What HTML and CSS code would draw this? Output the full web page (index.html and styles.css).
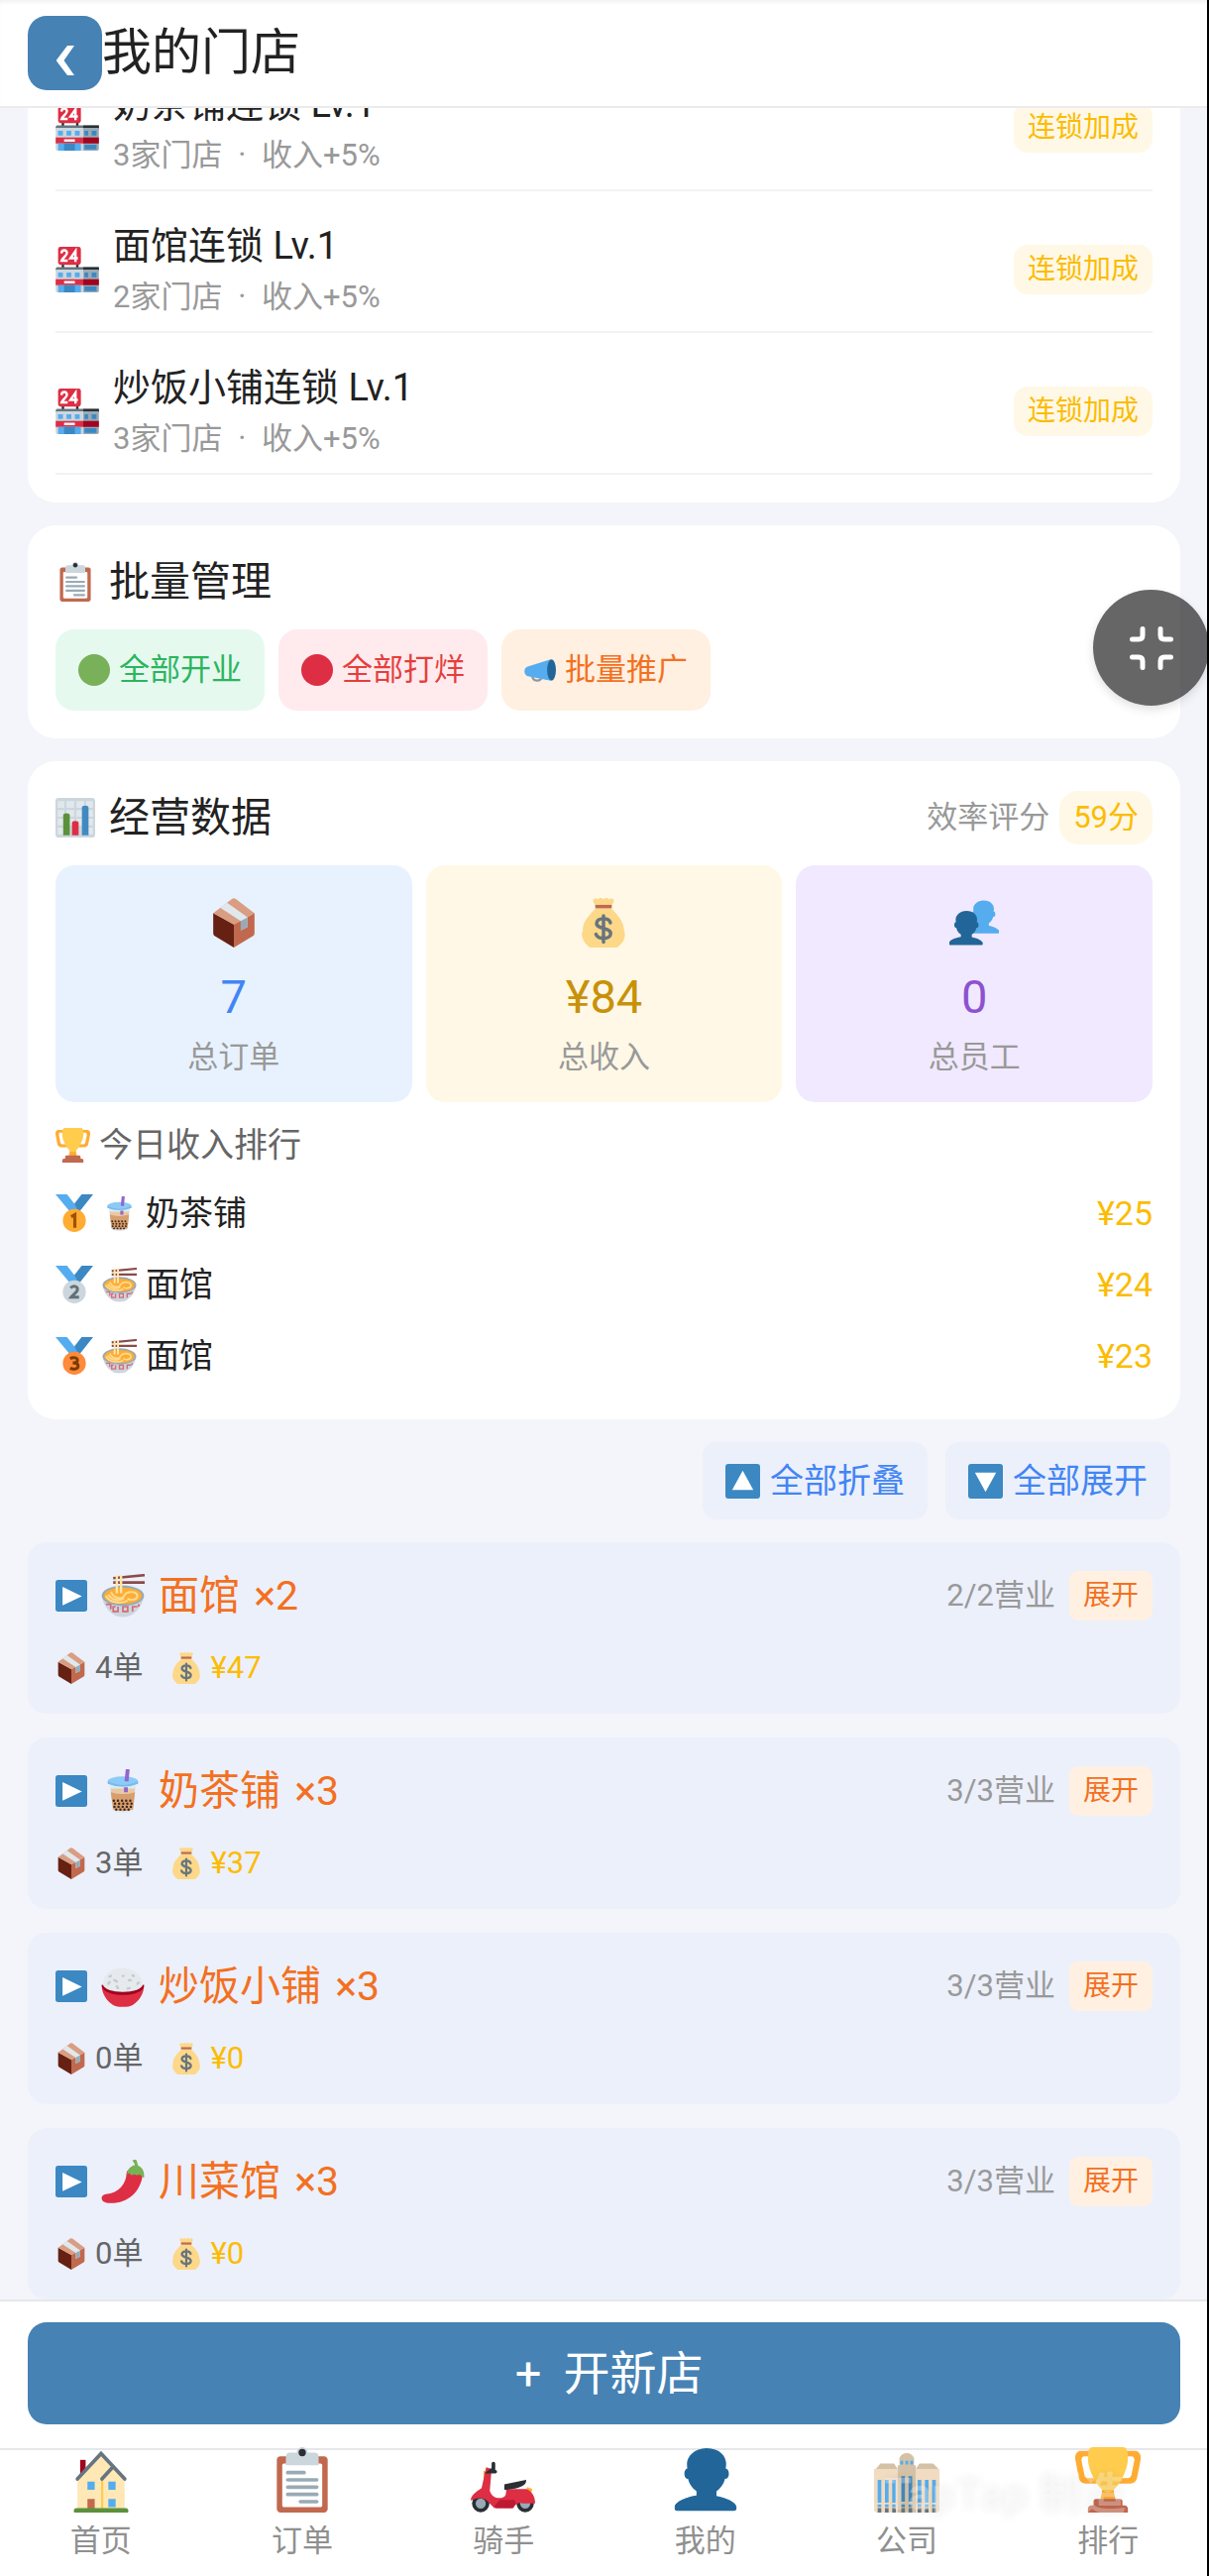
FILE: index.html
```html
<!DOCTYPE html>
<html lang="zh-CN">
<head>
    <meta charset="UTF-8">
    <meta name="viewport" content="width=device-width, initial-scale=1.0">
    <title>我的门店</title>
    <link rel="stylesheet" href="styles.css">
</head>
<body>
    <!-- 图标 -->
    <svg class="sprite" aria-hidden="true">
        <symbol id="i-shop24" viewBox="0 0 36 38">
            <path fill="#292f33" d="M5 14h2v4H5zM17 14h2v4h-2z"/>
            <rect fill="#dd2e44" x="2" y="0" width="19" height="15" rx="2"/>
            <path fill="none" stroke="#fff" stroke-width="2" d="M4.800 5.500c.2-3.600 5-3.300 4.500 0C9 7.500 6 9 5 11.500h5M16.500 12.500V3.500L12.300 9.500h6.200"/>
            <path fill="#66757f" d="M1 17h35v3H0v-2z"/>
            <path fill="#292f33" d="M23 17h13v3H23z"/>
            <path fill="#ccd6dd" d="M0 19h23v19H1l-1-1z"/>
            <path fill="#99aab5" d="M23 19h13v18l-1 1H23z"/>
            <path fill="#55acee" d="M2 21.500h4v4H2zM9 21.500h4v4H9zM16 21.500h4v4h-4z"/>
            <path fill="#3b88c3" d="M24 21.500h3v4h-3zM30 21.500h4v4h-4z"/>
            <path fill="#dd2e44" d="M0 27h23v5H0z"/>
            <path fill="#a0041e" d="M23 27h13v5H23z"/>
            <path fill="#fff" d="M7 28.500h9v2H7z"/>
            <path fill="#55acee" d="M2 32h19v6H2z"/>
            <path fill="#3b88c3" d="M7 32h9v6H7zM24 33h10v4H24z"/>
        </symbol>
        <symbol id="i-clipboard" viewBox="0 0 36 36">
            <path fill="#c1694f" d="M32 34c0 1.104-.896 2-2 2H6c-1.104 0-2-.896-2-2V7c0-1.104.896-2 2-2h24c1.104 0 2 .896 2 2v27z"/>
            <path fill="#fff" d="M29 32c0 .553-.447 1-1 1H8c-.552 0-1-.447-1-1V10c0-.552.448-1 1-1h20c.553 0 1 .448 1 1v22z"/>
            <path fill="#ccd6dd" d="M25 3h-4c0-1.657-1.343-3-3-3s-3 1.343-3 3h-4c-1.104 0-2 .896-2 2v5h18V5c0-1.104-.896-2-2-2z"/>
            <circle fill="#292f33" cx="18" cy="3" r="2"/>
            <path fill="none" stroke="#99aab5" stroke-width="2" stroke-linecap="round" d="M10 14h9M10 18h16M10 22h16M10 26h16M17 30h9"/>
        </symbol>
        <symbol id="i-green" viewBox="0 0 36 36"><circle fill="#78b159" cx="18" cy="18" r="18"/></symbol>
        <symbol id="i-red" viewBox="0 0 36 36"><circle fill="#dd2e44" cx="18" cy="18" r="18"/></symbol>
        <symbol id="i-megaphone" viewBox="0 0 36 36">
            <path fill="none" stroke="#8899a6" stroke-width="2.500" d="M9 23c0 9 11 9 11 2"/>
            <path fill="#55acee" d="M30 6 4 14c-5 1-5 10 0 11l26 5z"/>
            <ellipse fill="#269" cx="31" cy="18" rx="5" ry="12"/>
        </symbol>
        <symbol id="i-chart" viewBox="0 0 36 36">
            <rect fill="#ccd6dd" width="36" height="36" rx="3"/>
            <path fill="#e1e8ed" d="M2 3h6v6H2zM10 3h7v6h-7zM19 3h7v6h-7zM28 3h6v6h-6zM2 11h6v6H2zM10 11h7v6h-7zM19 11h7v6h-7zM28 11h6v6h-6zM2 19h6v6H2zM10 19h7v6h-7zM19 19h7v6h-7zM28 19h6v6h-6zM2 27h6v6H2zM28 27h6v6h-6z"/>
            <path fill="#5c913b" d="M7 16q0-2 3-2t3 2v18H7z"/>
            <path fill="#dd2e44" d="M15 23q0-2 3-2t3 2v11h-6z"/>
            <path fill="#4289c1" d="M24 9q0-2 3-2t3 2v25h-6z"/>
        </symbol>
        <symbol id="i-box" viewBox="0 0 36 36">
            <path fill="#662113" d="M3 11l15 8v17L4 27.500q-1-.5-1-2z"/>
            <path fill="#c1694f" d="M18 19l15-8v14.500q0 1.500-1 2L18 36z"/>
            <path fill="#d99e82" d="M18 .2q.6 0 1.200.4L33 11l-15 8.500L3 11 16.800.6Q17.400.2 18 .2z"/>
            <path fill="#e1e8ed" d="M13 3.500 28 14v7l-5 2.500v-6.700L8 7z"/>
            <path fill="#99aab5" d="M28 14v7l-5 2.500v-6.700z"/>
        </symbol>
        <symbol id="i-money" viewBox="0 0 36 36">
            <path fill="#fdd888" d="M12 8C7 13 2.500 18 3 24c-2 3 .5 8 3 10 1 1.500 2 2 4 2h16c2 0 3-.5 4-2 3-2 4.500-7 3-10 0-6-4-11-9-16z"/>
            <path fill="#fdd888" d="M10.500 1.500c1-2 3-1 3.500-.5 1-1.300 3-1.300 4 0 1-1.300 3-1.300 4 0 1-1 3-1 3.500.5.500 2-2 3-2 6h-11c0-3-2.500-4-2-6z"/>
            <path fill="#bf6952" d="M12 5h12v2.500H12z"/>
            <path fill="none" stroke="#67757f" stroke-width="2.500" stroke-linecap="round" d="M23 18c-1-4-9.500-4-10 .3C12.600 23 23.500 21 23.200 26c-.3 4.300-9.400 4.300-10.700.3M18 13v19"/>
        </symbol>
        <symbol id="i-user" viewBox="0 0 36 36">
            <path d="M24 26.799v-2.566c2-1.348 4.080-3.779 4.703-6.896.186.103.206.17.413.17.991 0 1.709-1.287 1.709-2.873 0-1.562-.823-2.827-1.794-2.865.187-.674.293-1.577.293-2.735C29.324 5.168 26 .527 18.541.527c-6.629 0-10.777 4.641-10.777 8.507 0 1.123.069 2.043.188 2.755-.911.137-1.629 1.352-1.629 2.845 0 1.587.804 2.873 1.796 2.873.206 0 .025-.067.209-.17C8.952 20.453 11 22.885 13 24.232v2.414c-5 .645-12 3.437-12 6.230v1.061C1 35 2.076 35 3.137 35h29.725C33.924 35 35 35 35 33.938v-1.061c0-2.615-6-5.225-11-6.078z"/>
        </symbol>
        <symbol id="i-users" viewBox="0 0 36 36">
            <use href="#i-user" x="12" y="1" width="25" height="26" fill="#55acee"/>
            <use href="#i-user" x="-1" y="9" width="26" height="26" fill="#269"/>
        </symbol>
        <symbol id="i-trophy" viewBox="0 0 36 36">
            <path fill="#ffac33" fill-rule="evenodd" d="M3 2h30c2 0 3.500 2 3 5l-2 10c-.4 1.800-2 3-4 3H6c-2 0-3.600-1.200-4-3L.1 7C-.4 4 1 2 3 2zm2 3c-1 0-1.700.8-1.500 2.500L5 15c.2 1.200 1 2 2 2h4L7 5zm24 0-4 12h4c1 0 1.800-.8 2-2l1.500-7.500C32.700 5.800 32 5 31 5z"/>
            <path fill="#ffac33" d="M15 22h6c.3 5 1.500 8 3 10H12c1.500-2 2.700-5 3-10z"/>
            <path fill="#ffcc4d" d="M29 6.600C29 13.500 22.300 25 18 25S7 13.500 7 6.600C7 1 8 0 10 0h16c2 0 3 1 3 6.600z"/>
            <path fill="#c1694f" d="M9 32h18c1.500 0 2 1 2 2v2H7v-2c0-1 .5-2 2-2zM10 30q0-1.500 1.500-1.500h13Q26 28.500 26 30v3H10z"/>
        </symbol>
        <symbol id="i-ribbon" viewBox="0 0 36 36">
            <path fill="#55acee" d="M0 0h11l11 14-7 4z"/>
            <path fill="#3b88c3" d="M36 0H25L18 9l4.500 8z"/>
        </symbol>
        <symbol id="i-gold" viewBox="0 0 36 36">
            <use href="#i-ribbon" width="36" height="36"/>
            <circle fill="#ffac33" cx="18" cy="25" r="11"/>
            <path fill="none" stroke="#9e5200" stroke-width="3" d="M15 21.500l3.500-2V32"/>
        </symbol>
        <symbol id="i-silver" viewBox="0 0 36 36">
            <use href="#i-ribbon" width="36" height="36"/>
            <circle fill="#ccd6dd" cx="18" cy="25" r="11"/>
            <path fill="none" stroke="#627077" stroke-width="2.800" d="M14.500 21.500c2-3 7-2 6.500 1.500-.3 2.500-4 4.500-6 7h7.500"/>
        </symbol>
        <symbol id="i-bronze" viewBox="0 0 36 36">
            <use href="#i-ribbon" width="36" height="36"/>
            <circle fill="#ff8a3b" cx="18" cy="25" r="11"/>
            <path fill="none" stroke="#7c3b00" stroke-width="2.800" d="M14 20.500c3-1.500 7-1 7 1.500 0 2-2 2.700-4.500 2.700 3 0 5.200.8 5.200 3 0 3-4.700 3.500-7.700 2"/>
        </symbol>
        <symbol id="i-tea" viewBox="0 0 36 36">
            <path fill="#dbeaf5" d="M7 11h22l-2.500 23c-2 2.500-15 2.500-17 0z"/>
            <path fill="#e8c9a6" d="M8 16h20l-1.800 17c-2 2-14.400 2-16.400 0z"/>
            <path fill="#d99e6d" d="M8 19q10 3 20 0l-1.600 14c-2 2-14.400 2-16.400 0z"/>
            <path fill="none" stroke="#3d2a20" stroke-width="2" stroke-linecap="round" stroke-dasharray="0 3.400" d="M10.500 26h15.500M11.500 28.500h14M11 31h14.500M12.500 33.300h12"/>
            <ellipse fill="#8ccaf7" cx="18" cy="10" rx="12.500" ry="4"/>
            <path fill="#77bbeb" d="M5.500 10q12.500 6 25 0v2q-12.500 5-25 0z"/>
            <path fill="none" stroke="#9266cc" stroke-width="3.200" d="M21 10 22 0M20.500 19v-4"/>
        </symbol>
        <symbol id="i-noodle" viewBox="0 0 36 36">
            <path fill="#ccd6dd" d="M1 18h34c0 7-5 13-10 16-3 2-11 2-14 0C6 31 1 25 1 18z"/>
            <path fill="none" stroke="#dd2e44" stroke-opacity=".65" stroke-width="1.400" d="M4 25h4v4M12 27h-2v4h4v-4M22 27h-4v4h4zM26 31v-4h4M31 25v2"/>
            <ellipse fill="#99aab5" cx="18" cy="18" rx="17.500" ry="8.500"/>
            <ellipse fill="#ffac33" cx="18" cy="18" rx="15.500" ry="6.800"/>
            <path fill="none" stroke="#fddc8f" stroke-width="1.700" d="M4 18c3 6 12 7 18 4M8 15c3 6 10 6 11 3 2-4 10-4 11 0 0 4-7 4-8 2M6 17c4 6 10 5 13 3"/>
            <path fill="none" stroke="#8a4b48" stroke-width="2.200" d="M10 3.500 36 1M10 7h26"/>
            <path fill="none" stroke="#ffe5a8" stroke-width="2" d="M13 1v15M16.500 1v15"/>
        </symbol>
        <symbol id="i-rice" viewBox="0 0 36 36">
            <path fill="#dd2e44" d="M.500 17h35c0 8-5 14-9.500 16.500-3 2-13 2-16 0C5.500 31 .500 25 .500 17z"/>
            <path fill="#a0041e" d="M.500 17h35c0 11-35 11-35 0z"/>
            <path fill="#e6eaed" d="M1.500 16C3 6 10 3 18 3s15 4 16.500 13c0 9-33 9-33 0z"/>
            <path fill="none" stroke="#c0ccd5" stroke-width="2" stroke-linecap="round" d="M7 10l1-.5M11 13l2 1M18 9.500h.5M23 13h1.500M6 16l1-1.500M13 18l1 1.500M22 20l1.500-.5M30 16l1-1M26 9l1 .5"/>
        </symbol>
        <symbol id="i-pepper" viewBox="0 0 36 36">
            <path fill="#dd2e44" d="M21 11c0 8-6 16.500-17 17.500-5 .5-5 7 2 7.200C20 37 33 28 34.500 11c0-5-13-5-13.500 0z"/>
            <path fill="#77b255" d="M26 1c0-1 3-2 3.500 0l1 4c3 1 5.500 4 5 10-2-1-2-2-4-3-1 1-2 1-4 0-2 1-3 1-4-1l-2 1c0-4 3-7 6.500-7.500C27.500 3 27 2 26 1z"/>
        </symbol>
        <symbol id="i-up" viewBox="0 0 36 36">
            <rect fill="#3b88c3" width="36" height="36" rx="3"/><path fill="#fff" d="M18 7l11 20H7z"/>
        </symbol>
        <symbol id="i-down" viewBox="0 0 36 36">
            <rect fill="#3b88c3" width="36" height="36" rx="3"/><path fill="#fff" d="M18 29l11-20H7z"/>
        </symbol>
        <symbol id="i-play" viewBox="0 0 36 36">
            <rect fill="#3b88c3" width="36" height="36" rx="3"/><path fill="#fff" d="M30 18.500 8 29V8z"/>
        </symbol>
        <symbol id="i-home" viewBox="0 0 36 36">
            <path fill="#a0041e" d="M6.500 7h3v9h-3z"/>
            <path fill="#ffe8b6" d="M5 17 18 4l13 12v18H5z"/>
            <path fill="#ffcc4d" d="M18 18h1.200v16H18z"/>
            <path fill="none" stroke="#66757f" stroke-width="2" stroke-linecap="round" d="M5 17.500 18 3.500l13 14M18.500 17.500l5.500-6"/>
            <path fill="#55acee" d="M10.500 19h4v4.500h-4zM22 19h4v4.500h-4zM22 28.500h4V33h-4z"/>
            <path fill="#c1694f" d="M10.500 28.500h4V35h-4z"/>
            <rect fill="#5c913b" x="3" y="33.500" width="30" height="3" rx="1.500"/>
        </symbol>
        <symbol id="i-scooter" viewBox="0 0 36 36">
            <circle fill="#99aab5" stroke="#292f33" stroke-width="2" cx="5.500" cy="31" r="3.800"/>
            <circle fill="#99aab5" stroke="#292f33" stroke-width="2" cx="30" cy="31" r="3.800"/>
            <path fill="#ffac33" d="M7 13l3 1-1 4-2-1zM31 22l3 1-1 3h-3z"/>
            <path fill="#dd2e44" d="M8.500 11 11.500 12 10.500 24c1 3 3 4 5 4 4 0 4-2 4-5h11c3 1 5 4 5 8h-7c-3-1-4 1-5 2.500H13l-3-3c-2-3-7-3-10-1 0-3 3-5 6-7z"/>
            <path fill="#be1931" d="M16 29h8l1 2-2 2.500h-9l-1-1z"/>
            <path fill="none" stroke="#292f33" stroke-width="2" stroke-linecap="round" d="M12.500 9v3l-2 1.500h3"/>
            <path fill="#292f33" d="M18.500 20.500 30.500 18c.5 3.500-5 5-12 5.500z"/>
        </symbol>
        <symbol id="i-office" viewBox="0 0 36 36">
            <path fill="#d3c2a7" d="M1 12l2.500-3H11l2 3zM23 12l2-3h7.500l3 3zM14 7c0-5 8-5 8 0z"/>
            <path fill="#f1dcc1" d="M0 12h13v24H1.500L0 35zM23 12h13v23l-1.500 1H23z"/>
            <path fill="#d3c2a7" d="M14 6h8v4h1v26H13V10h1z"/>
            <path fill="#55acee" d="M2 18h2v12.500H2zM6 18h2v12.500H6zM10 18h2v12.500h-2zM24 18h2v12.500h-2zM28 18h2v12.500h-2zM32 18h2v12.500h-2zM2 31.500h2v1.500H2zM6 31.500h2v1.500H6zM10 31.500h2v1.500h-2zM24 31.500h2v1.500h-2zM28 31.500h2v1.500h-2zM32 31.500h2v1.500h-2zM14.500 7.500h1.500v2h-1.500zM17.300 7.500h1.500v2h-1.500zM20 7.500h1.500v2H20z"/>
            <path fill="#4289c1" d="M15 16h2v14h-2zM19 16h2v14h-2zM15 31.500h2V33h-2zM19 31.500h2V33h-2z"/>
            <path fill="#66757f" d="M2 33.500h2V36H2zM6 33.500h2V36H6zM10 33.500h2V36h-2zM15 33.500h2V36h-2zM19 33.500h2V36h-2zM24 33.500h2V36h-2zM28 33.500h2V36h-2zM32 33.500h2V36h-2z"/>
        </symbol>
    </svg>

    <header class="header">
        <button class="back-btn" aria-label="返回">
            <svg width="18" height="30" viewBox="0 0 18 30"><path fill="#fff" d="M11 0h7L7.500 15 18 30h-7L0 15.500v-1z"/></svg>
        </button>
        <h1>我的门店</h1>
    </header>

    <main class="content">
        <section class="card">
            <ul class="chain-list">
                <li class="chain-item">
                    <svg class="icon-chain"><use href="#i-shop24"/></svg>
                    <div class="chain-info">
                        <div class="chain-name">奶茶铺连锁 Lv.1</div>
                        <div class="chain-desc">3家门店 <span class="dot">·</span> 收入+5%</div>
                    </div>
                    <span class="tag tag-gold">连锁加成</span>
                </li>
                <li class="chain-item">
                    <svg class="icon-chain"><use href="#i-shop24"/></svg>
                    <div class="chain-info">
                        <div class="chain-name">面馆连锁 Lv.1</div>
                        <div class="chain-desc">2家门店 <span class="dot">·</span> 收入+5%</div>
                    </div>
                    <span class="tag tag-gold">连锁加成</span>
                </li>
                <li class="chain-item">
                    <svg class="icon-chain"><use href="#i-shop24"/></svg>
                    <div class="chain-info">
                        <div class="chain-name">炒饭小铺连锁 Lv.1</div>
                        <div class="chain-desc">3家门店 <span class="dot">·</span> 收入+5%</div>
                    </div>
                    <span class="tag tag-gold">连锁加成</span>
                </li>
            </ul>
        </section>

        <section class="card">
            <div class="card-header">
                <h2><svg class="icon-title"><use href="#i-clipboard"/></svg>批量管理</h2>
            </div>
            <div class="batch-btns">
                <button class="batch-btn open"><svg class="icon-sm"><use href="#i-green"/></svg>全部开业</button>
                <button class="batch-btn close"><svg class="icon-sm"><use href="#i-red"/></svg>全部打烊</button>
                <button class="batch-btn promo"><svg class="icon-sm"><use href="#i-megaphone"/></svg>批量推广</button>
            </div>
        </section>

        <section class="card">
            <div class="card-header">
                <h2><svg class="icon-title"><use href="#i-chart"/></svg>经营数据</h2>
                <div class="score">效率评分 <span class="score-value">59分</span></div>
            </div>
            <div class="stats">
                <div class="stat blue">
                    <svg class="icon-stat"><use href="#i-box"/></svg>
                    <div class="stat-value">7</div>
                    <div class="stat-label">总订单</div>
                </div>
                <div class="stat gold">
                    <svg class="icon-stat"><use href="#i-money"/></svg>
                    <div class="stat-value">¥84</div>
                    <div class="stat-label">总收入</div>
                </div>
                <div class="stat purple">
                    <svg class="icon-stat"><use href="#i-users"/></svg>
                    <div class="stat-value">0</div>
                    <div class="stat-label">总员工</div>
                </div>
            </div>
            <h3 class="rank-title"><svg class="icon-md"><use href="#i-trophy"/></svg>今日收入排行</h3>
            <ol class="rank-list">
                <li class="rank-item">
                    <svg class="icon-medal"><use href="#i-gold"/></svg>
                    <svg class="icon-md"><use href="#i-tea"/></svg>
                    <span class="rank-name">奶茶铺</span>
                    <span class="rank-price">¥25</span>
                </li>
                <li class="rank-item">
                    <svg class="icon-medal"><use href="#i-silver"/></svg>
                    <svg class="icon-md"><use href="#i-noodle"/></svg>
                    <span class="rank-name">面馆</span>
                    <span class="rank-price">¥24</span>
                </li>
                <li class="rank-item">
                    <svg class="icon-medal"><use href="#i-bronze"/></svg>
                    <svg class="icon-md"><use href="#i-noodle"/></svg>
                    <span class="rank-name">面馆</span>
                    <span class="rank-price">¥23</span>
                </li>
            </ol>
        </section>

        <div class="fold-btns">
            <button class="fold-btn"><svg class="icon-md"><use href="#i-up"/></svg>全部折叠</button>
            <button class="fold-btn"><svg class="icon-md"><use href="#i-down"/></svg>全部展开</button>
        </div>

        <div class="groups">
            <section class="group">
                <div class="group-head">
                    <svg class="icon-sm"><use href="#i-play"/></svg>
                    <svg class="icon-food"><use href="#i-noodle"/></svg>
                    <h2 class="group-name">面馆 <span class="count">×2</span></h2>
                    <span class="group-status">2/2营业</span>
                    <button class="tag tag-orange">展开</button>
                </div>
                <div class="group-data">
                    <span class="data orders"><svg class="icon-sm"><use href="#i-box"/></svg>4单</span>
                    <span class="data income"><svg class="icon-sm"><use href="#i-money"/></svg>¥47</span>
                </div>
            </section>
            <section class="group">
                <div class="group-head">
                    <svg class="icon-sm"><use href="#i-play"/></svg>
                    <svg class="icon-food"><use href="#i-tea"/></svg>
                    <h2 class="group-name">奶茶铺 <span class="count">×3</span></h2>
                    <span class="group-status">3/3营业</span>
                    <button class="tag tag-orange">展开</button>
                </div>
                <div class="group-data">
                    <span class="data orders"><svg class="icon-sm"><use href="#i-box"/></svg>3单</span>
                    <span class="data income"><svg class="icon-sm"><use href="#i-money"/></svg>¥37</span>
                </div>
            </section>
            <section class="group">
                <div class="group-head">
                    <svg class="icon-sm"><use href="#i-play"/></svg>
                    <svg class="icon-food"><use href="#i-rice"/></svg>
                    <h2 class="group-name">炒饭小铺 <span class="count">×3</span></h2>
                    <span class="group-status">3/3营业</span>
                    <button class="tag tag-orange">展开</button>
                </div>
                <div class="group-data">
                    <span class="data orders"><svg class="icon-sm"><use href="#i-box"/></svg>0单</span>
                    <span class="data income"><svg class="icon-sm"><use href="#i-money"/></svg>¥0</span>
                </div>
            </section>
            <section class="group">
                <div class="group-head">
                    <svg class="icon-sm"><use href="#i-play"/></svg>
                    <svg class="icon-food"><use href="#i-pepper"/></svg>
                    <h2 class="group-name">川菜馆 <span class="count">×3</span></h2>
                    <span class="group-status">3/3营业</span>
                    <button class="tag tag-orange">展开</button>
                </div>
                <div class="group-data">
                    <span class="data orders"><svg class="icon-sm"><use href="#i-box"/></svg>0单</span>
                    <span class="data income"><svg class="icon-sm"><use href="#i-money"/></svg>¥0</span>
                </div>
            </section>
        </div>
    </main>

    <button class="float-btn" aria-label="退出全屏">
        <svg width="44" height="44" viewBox="0 0 44 44"><path d="M2.500 13H9q4 0 4-4V2.500M41.500 13H35q-4 0-4-4V2.500M2.500 31H9q4 0 4 4v6.500M41.500 31H35q-4 0-4 4v6.500"/></svg>
    </button>

    <footer class="bottom">
        <div class="action-bar">
            <button class="new-btn"><span class="plus">+</span>开新店</button>
        </div>
        <nav class="tabbar">
            <a class="tab" href="#"><svg class="icon-tab"><use href="#i-home"/></svg>首页</a>
            <a class="tab" href="#"><svg class="icon-tab"><use href="#i-clipboard"/></svg>订单</a>
            <a class="tab" href="#"><svg class="icon-tab"><use href="#i-scooter"/></svg>骑手</a>
            <a class="tab" href="#"><svg class="icon-tab user"><use href="#i-user"/></svg>我的</a>
            <a class="tab" href="#"><svg class="icon-tab"><use href="#i-office"/></svg>公司</a>
            <a class="tab" href="#"><svg class="icon-tab"><use href="#i-trophy"/></svg>排行</a>
        </nav>
        <div class="watermark" aria-hidden="true">TapTap 制造</div>
    </footer>
</body>
</html>
```
FILE: styles.css
```css
* {
    box-sizing: border-box;
}
body {
    margin: 0;
    min-height: 100vh;
    background-color: #f4f5fa;
    color: #222;
    font-family: Roboto, "Noto Sans CJK SC", sans-serif;
    font-size: 31px;
    line-height: 46px;
}
/* 屏幕右侧黑边 */
body::after {
    content: "";
    position: fixed;
    top: 0;
    right: 0;
    bottom: 0;
    width: 2px;
    background-color: #000;
    z-index: 40;
}
h1, h2, h3, ul, ol {
    margin: 0;
    padding: 0;
    font-weight: normal;
    list-style: none;
}
button {
    border: none;
    padding: 0;
    font-family: inherit;
    font-size: inherit;
    line-height: inherit;
    color: inherit;
    cursor: pointer;
}
svg {
    display: block;
    flex-shrink: 0;
}
.sprite {
    position: absolute;
    width: 0;
    height: 0;
}

/* 图标尺寸 */
.icon-sm {
    width: 32px;
    height: 32px;
}
.icon-md {
    width: 35px;
    height: 35px;
}
.icon-medal {
    width: 38px;
    height: 38px;
}
.icon-title {
    width: 40px;
    height: 40px;
}
.icon-chain {
    width: 44px;
    height: 46px;
}
.icon-food {
    width: 44px;
    height: 44px;
}
.icon-stat {
    width: 50px;
    height: 50px;
}
.icon-tab {
    width: 66px;
    height: 66px;
}

/* 顶部 */
.header {
    position: fixed;
    top: 0;
    left: 0;
    right: 0;
    height: 109px;
    display: flex;
    align-items: center;
    padding: 0 28px;
    background-color: #fff;
    border-bottom: 2px solid #ebebeb;
    box-shadow: inset 0 4px 4px -2px #f0f0f0;
    z-index: 10;
}
.header h1 {
    font-size: 50px;
    line-height: 75px;
}
.back-btn {
    display: flex;
    align-items: center;
    justify-content: center;
    width: 75px;
    height: 75px;
    padding-top: 14px;
    border-radius: 19px;
    background-color: #4682b4;
}

.content {
    padding: 36px 29px 0 28px;
}
.card {
    margin-bottom: 23px;
    padding: 28px;
    border-radius: 28px;
    background-color: #fff;
}
.card-header {
    display: flex;
    align-items: center;
    justify-content: space-between;
    height: 58px;
    margin-bottom: 19px;
}
.card-header h2 {
    display: flex;
    align-items: center;
    gap: 14px;
    font-size: 41px;
    line-height: 58px;
}
.tag {
    padding: 0 14px;
    font-size: 28px;
    line-height: 50px;
}
.tag-gold {
    border-radius: 14px;
    background-color: #fff8e6;
    color: #fbbc04;
}
.tag-orange {
    border-radius: 9px;
    background-color: #fff0e1;
    color: #f37021;
}

/* 连锁 */
.chain-list {
    display: flex;
    flex-direction: column;
    gap: 14px;
}
.chain-item {
    display: flex;
    align-items: center;
    gap: 14px;
    padding: 13px 0 10px;
    border-bottom: 2px solid #f3f3f3;
}
.chain-info {
    flex: 1;
}
.chain-name {
    font-size: 38px;
    line-height: 56px;
}
.chain-desc {
    line-height: 48px;
    color: #999;
}
.dot {
    margin: 0 8px;
}

/* 批量管理 */
.batch-btns {
    display: flex;
    gap: 14px;
}
.batch-btn {
    display: flex;
    align-items: center;
    gap: 9px;
    height: 82px;
    padding: 0 23px;
    border-radius: 19px;
}
.batch-btn.open {
    background-color: #e6f9ef;
    color: #2bb55f;
}
.batch-btn.close {
    background-color: #ffebed;
    color: #e53e3e;
}
.batch-btn.promo {
    background-color: #fff0e1;
    color: #f37021;
}

/* 经营数据 */
.score {
    display: flex;
    align-items: center;
    gap: 10px;
    color: #999;
}
.score-value {
    padding: 0 14px;
    border-radius: 19px;
    background-color: #fff8e6;
    color: #fbbc04;
    line-height: 54px;
}
.stats {
    display: grid;
    grid-template-columns: repeat(3, 1fr);
    gap: 14px;
}
.stat {
    display: flex;
    flex-direction: column;
    align-items: center;
    padding: 33px 14px 22px;
    border-radius: 19px;
}
.stat-value {
    margin: 20px 0 8px;
    font-size: 47px;
    line-height: 60px;
}
.stat-label {
    color: #999;
}
.stat.blue {
    background-color: #e8f2ff;
}
.stat.blue .stat-value {
    color: #4285f4;
}
.stat.gold {
    background-color: #fff8e6;
}
.stat.gold .stat-value {
    color: #c8910a;
}
.stat.purple {
    background-color: #f1e9ff;
}
.stat.purple .stat-value {
    color: #8c52d0;
}
.rank-title {
    display: flex;
    align-items: center;
    gap: 9px;
    margin: 14px 0 4px;
    font-size: 34px;
    line-height: 58px;
    color: #666;
}
.rank-item {
    display: flex;
    align-items: center;
    gap: 9px;
    height: 72px;
    font-size: 34px;
}
.rank-name {
    flex: 1;
}
.rank-price {
    color: #fbbc04;
}

/* 折叠 / 展开 */
.fold-btns {
    display: flex;
    justify-content: flex-end;
    gap: 18px;
    margin-bottom: 23px;
    padding-right: 10px;
}
.fold-btn {
    display: flex;
    align-items: center;
    gap: 10px;
    height: 78px;
    padding: 0 23px;
    border-radius: 14px;
    background-color: #ecf0fb;
    color: #4285f4;
    font-size: 34px;
}

/* 门店分组 */
.groups {
    display: flex;
    flex-direction: column;
    gap: 24px;
    padding-bottom: 280px;
}
.group {
    padding: 25px 28px 23px;
    border-radius: 19px;
    background-color: #ecf0fb;
}
.group-head {
    display: flex;
    align-items: center;
    gap: 14px;
    margin-bottom: 21px;
}
.group-name {
    flex: 1;
    font-size: 41px;
    line-height: 58px;
    color: #f37021;
}
.count {
    margin-left: 4px;
}
.group-status {
    color: #999;
}
.group-data {
    display: flex;
    gap: 28px;
}
.data {
    display: flex;
    align-items: center;
    gap: 8px;
}
.orders {
    color: #666;
}
.income {
    color: #fbbc04;
}

/* 悬浮按钮 */
.float-btn {
    position: fixed;
    top: 595px;
    right: 0;
    display: flex;
    align-items: center;
    justify-content: center;
    width: 117px;
    height: 117px;
    border-radius: 50%;
    background-color: rgba(0, 0, 0, 0.6);
    box-shadow: 0 4px 10px rgba(0, 0, 0, 0.12);
    z-index: 20;
}
.float-btn path {
    fill: none;
    stroke: #fff;
    stroke-width: 5;
    stroke-linecap: round;
}

/* 底部 */
.bottom {
    position: fixed;
    left: 0;
    right: 0;
    bottom: 0;
    background-color: #fff;
    z-index: 10;
}
.action-bar {
    padding: 21px 29px 24px 28px;
    border-top: 2px solid #e6e7ea;
}
.new-btn {
    display: flex;
    align-items: center;
    justify-content: center;
    gap: 12px;
    width: 100%;
    height: 103px;
    border-radius: 19px;
    background-color: #4682b4;
    color: #fff;
    font-size: 47px;
}
.plus {
    width: 47px;
    text-align: center;
}
.tabbar {
    display: grid;
    grid-template-columns: repeat(6, 1fr);
    padding-bottom: 12px;
    border-top: 2px solid #e6e7ea;
}
.tab {
    display: flex;
    flex-direction: column;
    align-items: center;
    gap: 6px;
    margin-top: -3px;
    color: #909090;
    text-decoration: none;
}
.icon-tab.user {
    fill: #269;
}
.watermark {
    position: absolute;
    right: 84px;
    bottom: 60px;
    color: rgba(255, 255, 255, 0.3);
    font-size: 44px;
    font-weight: bold;
    line-height: 44px;
    text-shadow: 0 0 8px rgba(0, 0, 0, 0.06);
    pointer-events: none;
}
```
